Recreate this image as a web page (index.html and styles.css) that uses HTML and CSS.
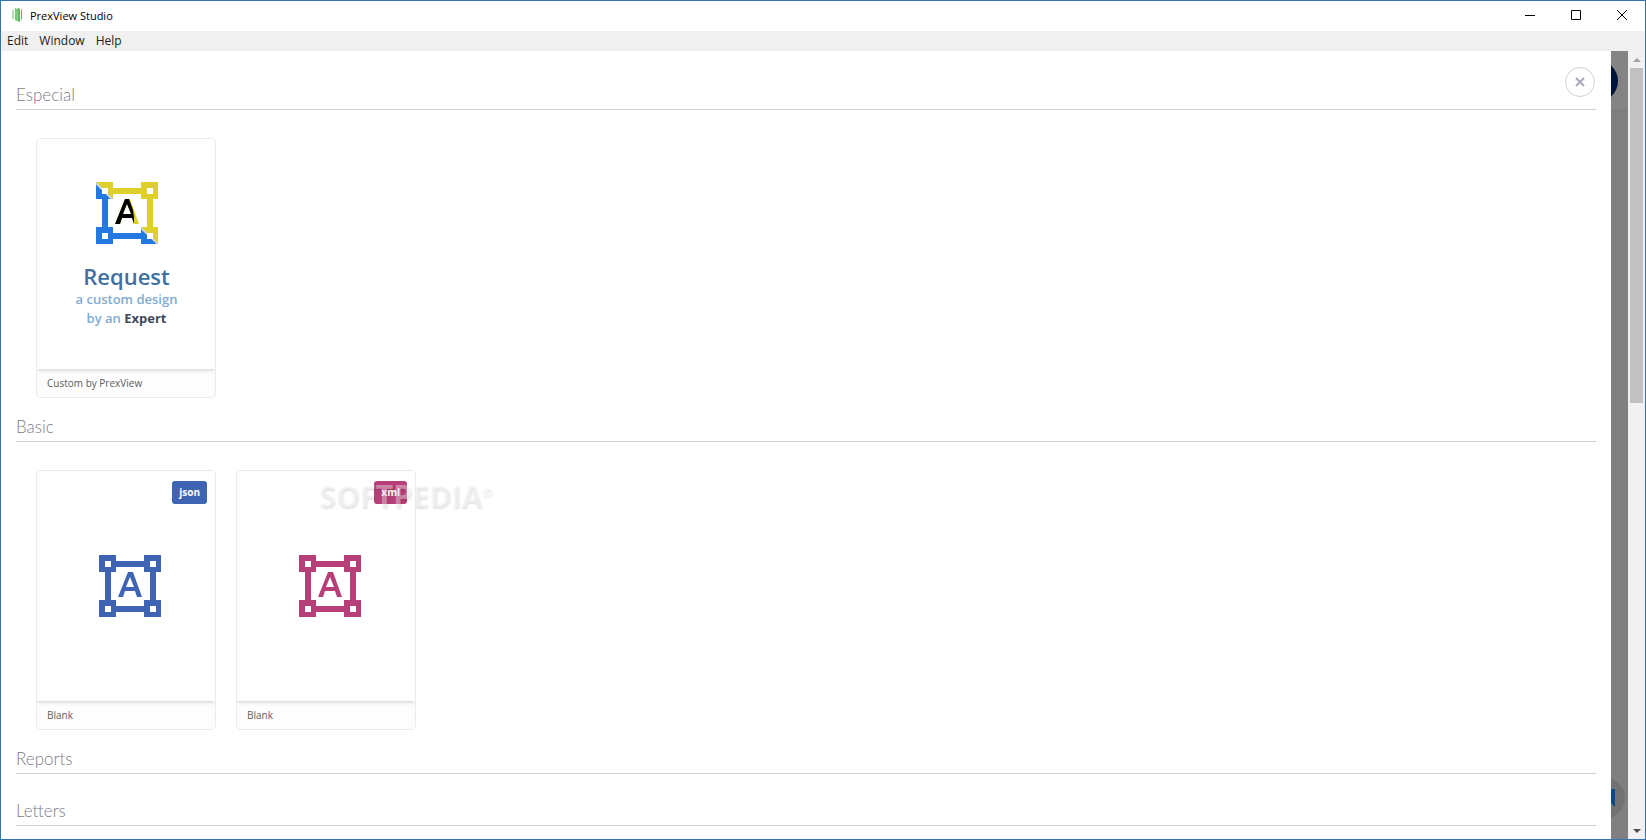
FILE: index.html
```html
<!DOCTYPE html>
<html lang="en">

<head>
    <meta charset="UTF-8">
    <title>PrexView Studio</title>
    <link rel="stylesheet" href="styles.css">
</head>

<body>
    <header class="titlebar">
        <svg class="logo" viewBox="0 0 12 16" width="12" height="16">
            <path d="M1 3h2v9H1z" fill="#b5e0b0"/>
            <path d="M4 1l2 1v12l-2-1z" fill="#7cc576"/>
            <path d="M6 1l3 1v13l-3-1z" fill="#8fd08a"/>
            <path d="M7 1l2 1v13l-2-1z" fill="#5cb85c"/>
            <path d="M10 2l1 1v9l-1 1z" fill="#5cb85c"/>
        </svg>
        <span class="title">PrexView Studio</span>
        <div class="windowButtons">
            <button type="button" aria-label="Minimize"><svg width="12" height="12" viewBox="0 0 12 12"><path d="M1 6.500h10"/></svg></button>
            <button type="button" aria-label="Maximize"><svg width="12" height="12" viewBox="0 0 12 12"><path d="M1.500 1.500h9v9h-9z"/></svg></button>
            <button type="button" aria-label="Close"><svg width="12" height="12" viewBox="0 0 12 12"><path d="M1 1l10 10M11 1L1 11"/></svg></button>
        </div>
    </header>
    <nav class="menubar">
        <button type="button">Edit</button>
        <button type="button">Window</button>
        <button type="button">Help</button>
    </nav>
    <div class="workspace">
        <main class="gallery">
            <button type="button" class="closeGallery" aria-label="Close gallery">
                <svg width="10" height="10" viewBox="0 0 10 10"><path d="M1 1l8 8M9 1L1 9"/></svg>
            </button>
            <section>
                <h2>Especial</h2>
                <div class="cards">
                    <a class="card" href="#custom">
                        <div class="preview custom">
                            <svg class="frame" viewBox="0 0 62 62" width="62" height="62">
                                <defs>
                                    <clipPath id="upper"><path d="M0 0H62V62z"/></clipPath>
                                    <clipPath id="lower"><path d="M0 0V62H62z"/></clipPath>
                                    <path id="frame" fill-rule="evenodd" d="M0 0h17v6h28V0h17v17h-5v28h5v17H45v-5H17v5H0V45h6V17H0zM6 6v6h6V6zM51 6v6h6V6zM6 51v6h6v-6zM51 51v6h6v-6zM17 12v5h-5v28h5v6h28v-6h6V17h-6v-5z"/>
                                    <path id="letter" fill-rule="evenodd" d="M19 42L29 17h5L43 42h-5l-2-6H26l-2 6zM27 32h8l-4-10z"/>
                                </defs>
                                <use href="#frame" fill="#dfcf2b" clip-path="url(#upper)"/>
                                <use href="#frame" fill="#2379df" clip-path="url(#lower)"/>
                                <path d="M0 1l16 16M45 46l17 16" stroke="#d4d4d0" stroke-width="2"/>
                                <path d="M6 6h6v6H6zM51 51h6v6h-6z" fill="#fff"/>
                                <use href="#letter" fill="#dfcf2b"/>
                                <path fill="#000" fill-rule="evenodd" d="M19 42L29 17h4l4 11 1 8v6l-2-6H26l-2 6zM27 32h8l-4-10z"/>
                            </svg>
                            <strong class="request">Request</strong>
                            <span class="pitch">a custom design<br>by an <b>Expert</b></span>
                        </div>
                        <div class="caption">Custom by PrexView</div>
                    </a>
                </div>
            </section>
            <section>
                <h2>Basic</h2>
                <div class="cards">
                    <a class="card json" href="#json">
                        <div class="preview blank">
                            <span class="badge">json</span>
                            <svg class="frame" viewBox="0 0 62 62" width="62" height="62"><use href="#frame"/><use href="#letter"/></svg>
                        </div>
                        <div class="caption">Blank</div>
                    </a>
                    <a class="card xml" href="#xml">
                        <div class="preview blank">
                            <span class="badge">xml</span>
                            <svg class="frame" viewBox="0 0 62 62" width="62" height="62"><use href="#frame"/><use href="#letter"/></svg>
                        </div>
                        <div class="caption">Blank</div>
                    </a>
                </div>
            </section>
            <section>
                <h2>Reports</h2>
            </section>
            <section>
                <h2>Letters</h2>
            </section>
            <div class="watermark">SOFTPEDIA<sup>®</sup></div>
        </main>
        <div class="backdrop">
            <div class="avatar"></div>
            <div class="help">
                <svg width="20" height="20" viewBox="0 0 20 20"><path d="M15 1h4v18l-9-9V7l5 5z" fill="#0b4a86"/></svg>
            </div>
        </div>
        <div class="scrollbar">
            <button type="button" aria-label="Scroll up"><svg width="8" height="4" viewBox="0 0 8 4"><path d="M0 4l4-4 4 4z" fill="#a3a3a3"/></svg></button>
            <div class="thumb"></div>
            <button type="button" class="down" aria-label="Scroll down"><svg width="8" height="4" viewBox="0 0 8 4"><path d="M0 0h8L4 4z" fill="#505050"/></svg></button>
        </div>
    </div>
</body>

</html>
```
FILE: styles.css
```css
* {
    box-sizing: border-box;
}
body {
    display: flex;
    flex-direction: column;
    height: 100vh;
    margin: 0;
    border: 1px solid #3277b3;
    background: #ffffff;
    color: #000000;
    font-family: "Open Sans", "Noto Sans", sans-serif;
    font-size: 12px;
    overflow: hidden;
}
button {
    border: 0;
    padding: 0;
    background: none;
    color: inherit;
    font: inherit;
}
svg {
    display: block;
}
.titlebar {
    display: flex;
    align-items: center;
    flex: 0 0 30px;
    padding: 0 0 2px 10px;
}
.title {
    margin-left: 7px;
    font-size: 11px;
}
.windowButtons {
    display: flex;
    align-self: stretch;
    margin-left: auto;
}
.windowButtons button {
    display: flex;
    align-items: center;
    justify-content: center;
    width: 46px;
}
.windowButtons path {
    fill: none;
    stroke: #000000;
}
.menubar {
    display: flex;
    flex: 0 0 20px;
    gap: 11px;
    padding: 0 0 2px 6px;
    background: #f0f0f0;
    color: #222222;
}
.workspace {
    display: flex;
    flex: 1;
    min-height: 0;
}
.gallery {
    position: relative;
    flex: 1;
    padding: 7px 15px 0;
    overflow: hidden;
}
.closeGallery {
    position: absolute;
    top: 16px;
    right: 16px;
    display: flex;
    align-items: center;
    justify-content: center;
    width: 30px;
    height: 30px;
    border: 1px solid #d0d0d6;
    border-radius: 50%;
}
.closeGallery path {
    stroke: #a9a9b9;
    stroke-width: 2;
}
h2 {
    display: flex;
    align-items: flex-end;
    height: 52px;
    margin: 0;
    padding-bottom: 3px;
    border-bottom: 1px solid #cfcfd3;
    color: #7c7c88;
    font-family: Lato, sans-serif;
    font-size: 17px;
    font-weight: 300;
    line-height: 22px;
}
.cards {
    display: flex;
    gap: 20px;
    padding: 28px 20px 0;
    margin-bottom: -8px;
}
.card {
    width: 180px;
    border: 1px solid #ebebeb;
    border-radius: 5px;
    background: #fdfdfd;
    color: #5c5c5c;
    text-decoration: none;
    overflow: hidden;
}
.preview {
    position: relative;
    display: flex;
    flex-direction: column;
    align-items: center;
    height: 230px;
    background: #ffffff;
    box-shadow: 0 1px 4px rgba(0, 0, 0, 0.2);
}
.custom {
    padding: 43px 0 0 1px;
}
.blank {
    justify-content: center;
    padding-left: 8px;
}
.request {
    margin-top: 18px;
    color: #40719f;
    font-size: 22px;
    font-weight: 600;
    line-height: 28px;
}
.pitch {
    color: #81abd3;
    font-size: 13px;
    font-weight: 600;
    line-height: 19px;
    text-align: center;
}
.pitch b {
    color: #3d4a5b;
    font-weight: 700;
}
.badge {
    position: absolute;
    top: 10px;
    right: 8px;
    padding: 0 7px;
    border-radius: 3px;
    color: #ffffff;
    font-size: 10px;
    font-weight: 700;
    line-height: 23px;
}
.json .badge {
    background: #4064b4;
}
.xml .badge {
    background: #b63f78;
}
.json .frame {
    fill: #4064b4;
}
.xml .frame {
    fill: #b63f78;
}
.caption {
    padding: 0 10px;
    font-size: 10px;
    line-height: 28px;
}
.watermark {
    position: absolute;
    top: 427px;
    left: 318px;
    color: rgba(255, 255, 255, 0.4);
    font-size: 30px;
    font-weight: 700;
    line-height: 36px;
    text-shadow: 1px 2px 2px rgba(0, 0, 0, 0.11);
}
.watermark sup {
    font-size: 12px;
    line-height: 0;
}
.backdrop {
    position: relative;
    width: 17px;
    background: linear-gradient(#848484 59px, #7a7a7a 59px, #7a7a7a 60px, #808080 60px);
    overflow: hidden;
}
.avatar {
    position: absolute;
    top: 9px;
    right: 10px;
    width: 42px;
    height: 42px;
    border-radius: 50%;
    background: #00143a;
}
.help {
    position: absolute;
    right: 3px;
    bottom: 20px;
    display: flex;
    align-items: center;
    justify-content: center;
    width: 42px;
    height: 42px;
    padding-left: 4px;
    border-radius: 50%;
    background: #727272;
}
.scrollbar {
    display: flex;
    flex-direction: column;
    width: 17px;
    padding: 0 2px;
    background: #f1f1f1;
}
.scrollbar button {
    display: flex;
    align-items: center;
    justify-content: center;
    height: 17px;
}
.thumb {
    height: 42.5%;
    background: #c1c1c1;
}
.scrollbar .down {
    margin-top: auto;
}
```
